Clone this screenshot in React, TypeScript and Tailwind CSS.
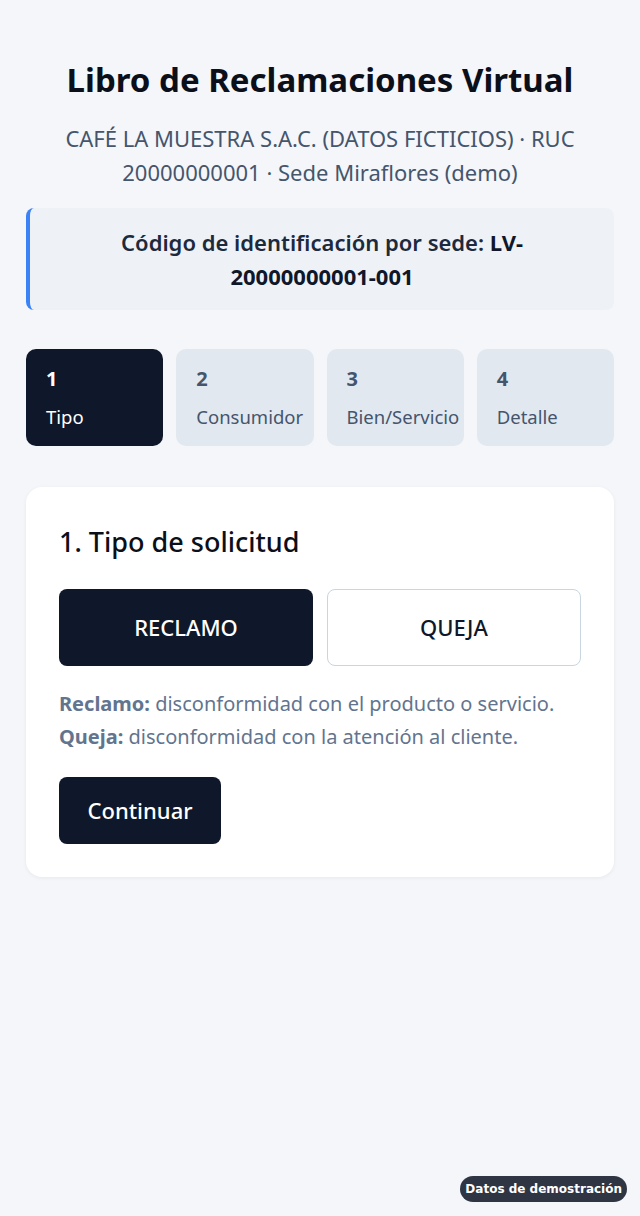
import { useState } from "react";

const steps = [
  { n: 1, label: "Tipo" },
  { n: 2, label: "Consumidor" },
  { n: 3, label: "Bien/Servicio" },
  { n: 4, label: "Detalle" },
];

export default function App() {
  const [tipo, setTipo] = useState<"RECLAMO" | "QUEJA">("RECLAMO");
  const current = 1;

  return (
    <div className="min-h-[1216px] bg-[#f4f6fa] font-['Noto_Sans',sans-serif] text-slate-900">
      <main className="px-[26px] pt-[58px] pb-10">
        {/* Header */}
        <header className="text-center">
          <h1 className="text-[33px] font-bold leading-[44px] text-[#0b0f19]">
            Libro de Reclamaciones Virtual
          </h1>
          <p className="mt-[19px] px-7 text-[22px] leading-[34px] text-slate-600">
            CAFÉ LA MUESTRA S.A.C. (DATOS FICTICIOS) · RUC 20000000001 · Sede Miraflores (demo)
          </p>
        </header>

        {/* Codigo de sede */}
        <div className="mt-[19px] rounded-lg border-l-4 border-[#3b82f6] bg-[#eef2f7] px-10 py-[17px] text-center text-[22px] font-semibold leading-[34px] text-slate-800">
          Código de identificación por sede: <span className="font-bold text-slate-900">LV-20000000001-001</span>
        </div>

        {/* Steps */}
        <div className="mt-[39px] grid grid-cols-4 gap-[13px]">
          {steps.map((s) => {
            const active = s.n === current;
            return (
              <div
                key={s.n}
                className={`flex h-[97px] flex-col justify-center rounded-[10px] px-5 ${
                  active ? "bg-[#0f172a] text-white" : "bg-[#e2e8f0] text-slate-600"
                }`}
              >
                <span className="text-[20px] font-bold leading-[30px]">{s.n}</span>
                <span className="mt-[9px] whitespace-nowrap text-[18.5px] leading-[28px]">{s.label}</span>
              </div>
            );
          })}
        </div>

        {/* Card */}
        <section className="mt-[41px] rounded-2xl bg-white px-[33px] pt-[33px] pb-[33px] shadow-[0_1px_4px_rgba(15,23,42,0.06)]">
          <h2 className="text-[27px] font-medium leading-[44px] text-[#0b0f19]">1. Tipo de solicitud</h2>

          <div className="mt-[25px] grid grid-cols-2 gap-[14px]">
            <button
              onClick={() => setTipo("RECLAMO")}
              className={`h-[77px] rounded-lg text-[22px] font-medium ${
                tipo === "RECLAMO"
                  ? "bg-[#0f172a] text-white"
                  : "border border-slate-300 bg-white text-slate-900"
              }`}
            >
              RECLAMO
            </button>
            <button
              onClick={() => setTipo("QUEJA")}
              className={`h-[77px] rounded-lg text-[22px] font-medium ${
                tipo === "QUEJA"
                  ? "bg-[#0f172a] text-white"
                  : "border border-slate-300 bg-white text-slate-900"
              }`}
            >
              QUEJA
            </button>
          </div>

          <div className="mt-[21px] text-[20px] leading-[33px] text-slate-500">
            <p>
              <strong className="font-bold">Reclamo:</strong> disconformidad con el producto o servicio.
            </p>
            <p>
              <strong className="font-bold">Queja:</strong> disconformidad con la atención al cliente.
            </p>
          </div>

          <button className="mt-[24px] h-[67px] w-[162px] rounded-lg bg-[#0f172a] text-[22px] font-medium text-white">
            Continuar
          </button>
        </section>
      </main>

      <div className="fixed right-[13px] bottom-[14px] rounded-full bg-[#2f3543] px-[5px] py-[5px] font-['DejaVu_Sans',sans-serif] text-[12px] font-bold leading-[16px] text-white">
        Datos de demostración
      </div>
    </div>
  );
}
